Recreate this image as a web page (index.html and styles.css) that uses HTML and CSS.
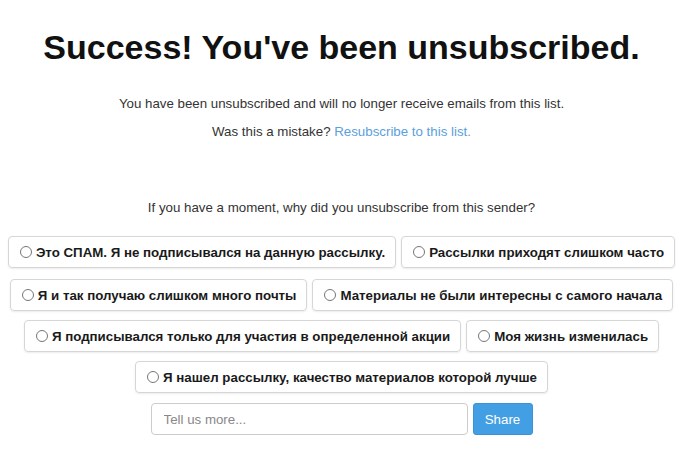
FILE: index.html
```html
<!DOCTYPE html>
<html lang="en">
<head>
    <meta charset="UTF-8">
    <title>Unsubscribed</title>
    <link rel="stylesheet" href="styles.css">
</head>
<body>
<div class="page">
    <h1 class="title">Success! You've been unsubscribed.</h1>
    <p class="note">You have been unsubscribed and will no longer receive emails from this list.</p>
    <p class="note">Was this a mistake? <a href="#" class="link">Resubscribe to this list.</a></p>

    <form class="survey">
        <p class="question">If you have a moment, why did you unsubscribe from this sender?</p>
        <div class="row first">
            <label class="option"><input type="radio" name="reason"> Это СПАМ. Я не подписывался на данную рассылку.</label>
            <label class="option"><input type="radio" name="reason"> Рассылки приходят слишком часто</label>
        </div>
        <div class="row">
            <label class="option"><input type="radio" name="reason"> Я и так получаю слишком много почты</label>
            <label class="option"><input type="radio" name="reason"> Материалы не были интересны с самого начала</label>
        </div>
        <div class="row">
            <label class="option"><input type="radio" name="reason"> Я подписывался только для участия в определенной акции</label>
            <label class="option"><input type="radio" name="reason"> Моя жизнь изменилась</label>
        </div>
        <div class="row last">
            <label class="option"><input type="radio" name="reason"> Я нашел рассылку, качество материалов которой лучше</label>
        </div>
        <div class="row">
            <input type="text" class="more" placeholder="Tell us more...">
            <button type="button" class="share">Share</button>
        </div>
    </form>
</div>
</body>
</html>
```

FILE: styles.css
```css
* {
    margin: 0;
    padding: 0;
    box-sizing: border-box;
}

body {
    font-family: "Liberation Sans", Arial, sans-serif;
    color: #333;
    background: #fff;
}

.page {
    width: 683px;
    padding-top: 27px;
    text-align: center;
}

.title {
    font-size: 34px;
    font-weight: bold;
    color: #111;
    line-height: 40px;
    margin-bottom: 29px;
}

.note {
    font-size: 13.3px;
    line-height: 16px;
    margin-bottom: 12px;
}

.link {
    color: #5b9fdc;
    text-decoration: none;
}

.survey {
    margin-top: 60px;
}

.question {
    font-size: 13.3px;
    line-height: 16px;
    margin-bottom: 20px;
}

.row {
    display: flex;
    justify-content: center;
    gap: 5px;
    margin-bottom: 9px;
}

.row.first {
    margin-bottom: 11px;
}

.row.last {
    margin-bottom: 10px;
}

.option {
    display: flex;
    align-items: center;
    height: 32px;
    padding: 0 10px;
    border: 1px solid #d6d6d6;
    border-radius: 4px;
    box-shadow: 0 1px 2px rgba(0, 0, 0, 0.08);
    font-size: 13.3px;
    font-weight: bold;
    color: #1a1a1a;
    white-space: nowrap;
}

.option input {
    width: 12px;
    height: 12px;
    margin: 0 4px 0 1px;
}

.more {
    width: 317px;
    height: 32px;
    padding: 0 12px;
    border: 1px solid #ccc;
    border-radius: 4px;
    font-family: "Liberation Sans", Arial, sans-serif;
    font-size: 13.3px;
    color: #333;
}

.more::placeholder {
    color: #888;
}

.share {
    width: 60px;
    height: 32px;
    border: 1px solid #3a93d8;
    border-radius: 3px;
    background: #439fe4;
    color: #fff;
    font-family: "Liberation Sans", Arial, sans-serif;
    font-size: 13.3px;
}
```
